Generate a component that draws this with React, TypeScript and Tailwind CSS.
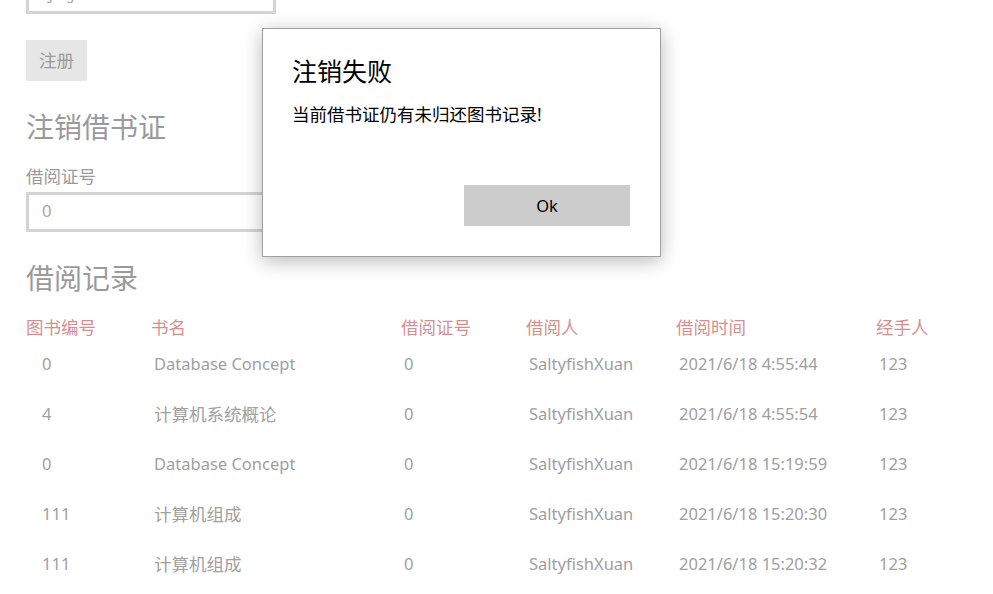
import React from "react";

const rows = [
  ["0", "Database Concept", "0", "SaltyfishXuan", "2021/6/18 4:55:44", "123"],
  ["4", "计算机系统概论", "0", "SaltyfishXuan", "2021/6/18 4:55:54", "123"],
  ["0", "Database Concept", "0", "SaltyfishXuan", "2021/6/18 15:19:59", "123"],
  ["111", "计算机组成", "0", "SaltyfishXuan", "2021/6/18 15:20:30", "123"],
  ["111", "计算机组成", "0", "SaltyfishXuan", "2021/6/18 15:20:32", "123"],
];

const headers = ["图书编号", "书名", "借阅证号", "借阅人", "借阅时间", "经手人"];

const hasCjk = (s: string) => /[\u4e00-\u9fff]/.test(s);

export default function App() {
  return (
    <div className="relative h-[594px] w-[993px] overflow-hidden bg-white font-['Segoe_UI','Noto_Sans','Noto_Sans_CJK_SC',sans-serif] text-[17.5px] text-[#9a9a9a]">
      {/* page content */}
      <div className="flex flex-col items-start pl-[26px]">
        <div className="mt-[-26px] flex h-[40px] w-[250px] items-center border-[3px] border-[#d4d4d4] px-[13px] text-[#a8a8a8]">
          学号
        </div>

        <button className="mt-[26px] h-[41px] w-[61px] bg-[#e6e6e6] text-[#9a9a9a]">
          注册
        </button>

        <h2 className="mt-[32px] text-[28px] leading-none">注销借书证</h2>

        <div className="mt-[27px] leading-none">借阅证号</div>

        <div className="mt-[6px] flex h-[40px] w-[250px] items-center border-[3px] border-[#d4d4d4] px-[13px] text-[16.5px] text-[#a8a8a8]">
          0
        </div>

        <h2 className="mt-[32px] text-[28px] leading-none">借阅记录</h2>

        {/* table */}
        <div className="mt-[22px] flex flex-col">
          <div className="grid h-[24px] grid-cols-[125px_250px_125px_150px_200px_100px] items-center text-[#d68f8f]">
            {headers.map((h) => (
              <div key={h}>{h}</div>
            ))}
          </div>
          {rows.map((r, i) => (
            <div
              key={i}
              className="grid h-[50px] grid-cols-[125px_250px_125px_150px_200px_100px] items-center pt-[3px] text-[#a0a0a0]"
            >
              {r.map((c, j) => (
                <div
                  key={j}
                  className={`${j === 0 ? "pl-[16px]" : "pl-[3px]"} ${hasCjk(c) ? "text-[17.5px]" : "text-[16.5px]"}`}
                >
                  {c}
                </div>
              ))}
            </div>
          ))}
        </div>
      </div>

      {/* dialog */}
      <div className="absolute left-[262px] top-[28px] flex h-[229px] w-[399px] flex-col border border-[#a0a0a0] bg-white pl-[29px] pr-[30px] shadow-[0_4px_18px_rgba(0,0,0,0.28)]">
        <div className="mt-[25px] text-[25px] leading-[34px] text-black">注销失败</div>
        <div className="mt-[14px] leading-[24px] text-black">当前借书证仍有未归还图书记录!</div>
        <div className="mt-auto mb-[30px] flex justify-end">
          <button className="h-[41px] w-[166px] bg-[#cccccc] pt-[1px] text-[16.5px] text-black">Ok</button>
        </div>
      </div>
    </div>
  );
}
